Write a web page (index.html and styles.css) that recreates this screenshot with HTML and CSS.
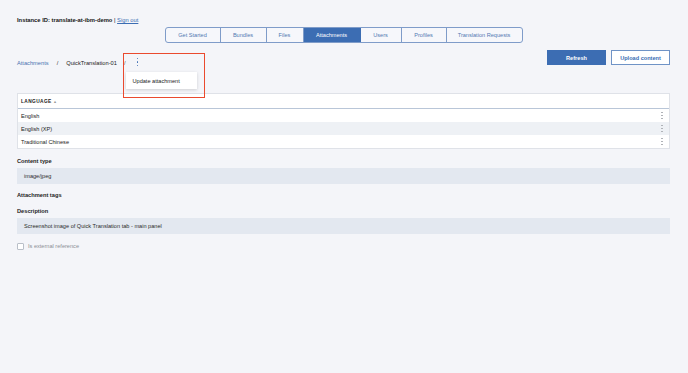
FILE: index.html
```html
<!DOCTYPE html>
<html>
<head>
<meta charset="utf-8">
<link rel="stylesheet" href="styles.css">
</head>
<body>
<div class="page">
  <div class="instance"><b>Instance ID: translate-at-ibm-demo</b> | <a class="link" href="#">Sign out</a></div>
  <nav class="tabs">
    <span class="tab t1">Get Started</span>
    <span class="tab t2">Bundles</span>
    <span class="tab t3">Files</span>
    <span class="tab t4 active">Attachments</span>
    <span class="tab t5">Users</span>
    <span class="tab t6">Profiles</span>
    <span class="tab t7">Translation Requests</span>
  </nav>
  <div class="toolbar">
    <div class="crumbs">
      <a class="crumb-link" href="#">Attachments</a>
      <span class="sep">/</span>
      <span class="crumb">QuickTranslation-01</span>
      <span class="sep sep2">/</span>
      <span class="kebab-wrap">
        <span class="kebab blue"><i></i><i></i><i></i></span>
        <div class="menu">Update attachment</div>
        <div class="highlight"></div>
      </span>
    </div>
    <div class="actions">
      <button class="btn primary">Refresh</button>
      <button class="btn secondary">Upload content</button>
    </div>
  </div>
  <div class="table">
    <div class="thead">LANGUAGE <span class="arrow">▴</span></div>
    <div class="row"><span>English</span><span class="kebab grey"><i></i><i></i><i></i></span></div>
    <div class="row alt"><span>English (XP)</span><span class="kebab grey"><i></i><i></i><i></i></span></div>
    <div class="row"><span>Traditional Chinese</span><span class="kebab grey"><i></i><i></i><i></i></span></div>
  </div>
  <div class="label l1">Content type</div>
  <div class="field">image/jpeg</div>
  <div class="label l2">Attachment tags</div>
  <div class="label l3">Description</div>
  <div class="field">Screenshot image of Quick Translation tab - main panel</div>
  <label class="check"><span class="box"></span>Is external reference</label>
</div>
</body>
</html>
```
FILE: styles.css
```css
* { box-sizing: border-box; }
html, body { margin: 0; padding: 0; }
body {
  background: #f4f5f9;
  font-family: "Liberation Sans", Arial, sans-serif;
  font-size: 5.6px;
  color: #1f1f1f;
  width: 688px;
  height: 373px;
  overflow: hidden;
}
.page { padding: 14px 18px 0 17px; }
.instance { line-height: 12px; height: 12px; font-size: 5.8px; color: #161616; }
.instance b { font-weight: bold; }
.link { color: #3b6db3; text-decoration: underline; }

.tabs {
  margin: 1px auto 0;
  width: 358px;
  height: 16px;
  display: flex;
  border: 1px solid #7f9cc9;
  border-radius: 3px;
  overflow: hidden;
  background: #f6f7fb;
}
.tab {
  display: flex; align-items: center; justify-content: center;
  color: #5279b2;
  border-right: 1px solid #7f9cc9;
  font-size: 5.6px;
}
.tab:last-child { border-right: 0; }
.t1 { width: 55px; } .t2 { width: 46px; } .t3 { width: 37px; } .t4 { width: 57px; }
.t5 { width: 41px; } .t6 { width: 45px; } .t7 { flex: 1; }
.tab.active { background: #3c6db3; color: #fff; border-right-color: #3c6db3; }

.toolbar { margin-top: 7px; height: 15px; display: flex; justify-content: space-between; }
.crumbs { display: flex; align-items: center; height: 15px; padding-top: 11px; font-size: 5.7px; }
.crumb-link { color: #4a73b0; text-decoration: none; }
.sep { margin: 0 8px 0 8px; color: #333; }
.sep2 { margin: 0 0 0 7px; color: #555; }
.crumb { color: #222; }
.kebab-wrap { position: relative; margin-left: 11px; width: 4px; height: 10px; display: inline-block; }
.kebab { display: inline-flex; flex-direction: column; justify-content: space-between; align-items: center; }
.kebab i { display: block; width: 1.4px; height: 1.4px; border-radius: 50%; }
.kebab.blue { position: absolute; left: 0; top: -1px; height: 10px; width: 2px; padding: 0.5px 0; }
.kebab.blue i { background: #3b6db3; width: 1.6px; height: 1.8px; }
.menu {
  position: absolute; left: -11px; top: 14px;
  width: 71px; height: 17px;
  background: #fff;
  box-shadow: 0 1px 3px rgba(0,0,0,0.16);
  padding-left: 7px;
  display: flex; align-items: center;
  color: #222; font-size: 5.6px;
  white-space: nowrap;
}
.highlight {
  position: absolute; left: -14px; top: -5px;
  width: 82px; height: 45px;
  border: 1.5px solid #ea4a2e;
}
.actions { display: flex; gap: 5px; }
.btn {
  height: 15px; width: 59px; padding: 0;
  font-family: "Liberation Sans", Arial, sans-serif;
  font-size: 5.6px; font-weight: bold;
  border-radius: 0;
}
.primary { background: #3c6db3; color: #fff; border: 1px solid #3c6db3; }
.secondary { background: #fff; color: #3b6db3; border: 1px solid #6f93c6; }

.table { margin-top: 28px; border: 1px solid #dfe2e8; background: #fff; }
.thead {
  height: 15px; display: flex; align-items: center; padding-left: 3px;
  font-size: 4.8px; font-weight: bold; letter-spacing: 0.4px; color: #222;
  border-bottom: 1px solid #b9c6d8;
}
.thead .arrow { color: #999; margin-left: 2px; font-size: 4px; }
.row {
  height: 13px; display: flex; align-items: center; justify-content: space-between;
  padding: 0 6px 0 3px; font-size: 5.6px; color: #222; background: #fff;
}
.row.alt { background: #eef1f5; }
.kebab.grey { height: 7px; width: 2px; }
.kebab.grey i { background: #b0b3b8; width: 1.1px; height: 1.2px; border-radius: 0; }

.label { font-weight: bold; font-size: 5.7px; line-height: 10px; height: 10px; color: #1d1d1d; }
.l1 { margin-top: 7px; }
.l2 { margin-top: 6px; }
.l3 { margin-top: 6px; }
.field {
  margin-top: 2px; height: 16px; background: #e3e8f0;
  display: flex; align-items: center; padding-left: 7px;
  font-size: 5.6px; color: #2b2b2b;
}
.check { margin-top: 8px; display: flex; align-items: center; gap: 4px; color: #8b8f96; font-size: 5.6px; height: 8px; }
.box { width: 7px; height: 7px; border: 1px solid #b9bfc8; border-radius: 1px; background: #fff; }
```
